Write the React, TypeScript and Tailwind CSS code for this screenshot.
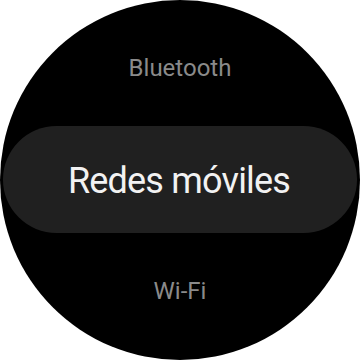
export default function App() {
  return (
    <div className="w-[360px] h-[360px] bg-white">
      <div
        className="w-[360px] h-[360px] rounded-full bg-black overflow-hidden flex flex-col items-center"
        style={{ fontFamily: "Roboto, 'Noto Sans', sans-serif" }}
      >
        <div className="pt-[53px] text-[24px] leading-[30px] text-[#8a8a8a]">Bluetooth</div>
        <div className="mt-[43px] w-[354px] h-[107px] shrink-0 rounded-full bg-[#202020] flex items-center justify-center pt-[2px] pr-[2px]">
          <span className="text-[36px] tracking-[-0.8px] text-[#f2f2f2] leading-none">
            Redes móviles
          </span>
        </div>
        <div className="mt-[43px] text-[24px] leading-[30px] text-[#8a8a8a]">Wi-Fi</div>
      </div>
    </div>
  );
}
